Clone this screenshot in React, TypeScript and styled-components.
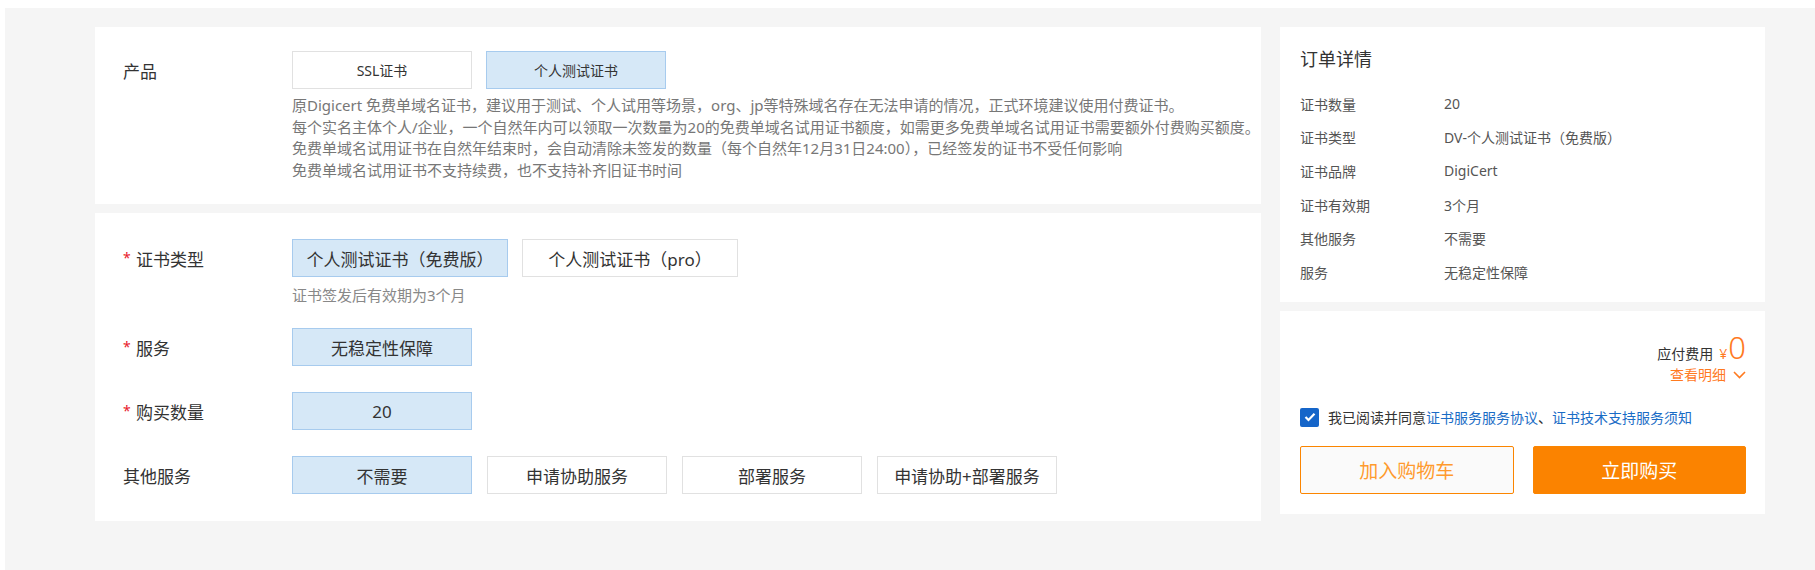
import React from "react";
import styled, { createGlobalStyle } from "styled-components";

const GlobalStyle = createGlobalStyle`
  html, body {
    margin: 0;
    padding: 0;
    background: #f5f5f5;
    font-family: "Noto Sans", "Noto Sans CJK SC", sans-serif;
    color: #333;
  }
  * { box-sizing: border-box; }
`;

const Page = styled.div`
  display: flex;
  min-height: 570px;
`;

const SideStrip = styled.div`
  width: 5px;
  background: #fff;
  flex-shrink: 0;
`;

const Body = styled.div`
  flex: 1;
  display: flex;
  flex-direction: column;
`;

const TopStrip = styled.div`
  height: 8px;
  background: #fff;
`;

const Main = styled.div`
  display: flex;
  align-items: flex-start;
  gap: 19px;
  padding: 19px 50px 0 90px;
`;

const LeftCol = styled.div`
  width: 1166px;
  display: flex;
  flex-direction: column;
  gap: 9px;
`;

const RightCol = styled.div`
  width: 485px;
  display: flex;
  flex-direction: column;
  gap: 9px;
`;

const Card = styled.section<{ $pad: string }>`
  background: #fff;
  padding: ${(p) => p.$pad};
`;

const FormRow = styled.div`
  display: grid;
  grid-template-columns: 169px 1fr;
  align-items: start;
`;

const RowLabel = styled.div`
  font-size: 17px;
  height: 38px;
  padding-top: 4px;
  line-height: 34px;
  color: #333;
  white-space: nowrap;
  display: flex;
  align-items: center;
`;

const Required = styled.span`
  color: #e8202a;
  font-size: 14px;
  width: 13px;
  display: inline-block;
  line-height: 1;
  margin-top: -4px;
`;

const OptionGroup = styled.div<{ $gap: number }>`
  display: flex;
  gap: ${(p) => p.$gap}px;
`;

const OptionButton = styled.div<{ $selected?: boolean; $w?: number; $fs?: number }>`
  width: ${(p) => p.$w ?? 180}px;
  height: 38px;
  display: flex;
  align-items: center;
  justify-content: center;
  font-size: ${(p) => p.$fs ?? 17}px;
  color: #333;
  white-space: nowrap;
  border: 1px solid ${(p) => (p.$selected ? "#a7cbee" : "#e1e1e1")};
  background: ${(p) => (p.$selected ? "#d6e8f7" : "#fff")};
  cursor: pointer;
`;

const Description = styled.div`
  margin-top: 6px;
  font-size: 15px;
  line-height: 21.5px;
  color: #777;
  white-space: nowrap;
`;

const Hint = styled.div`
  margin-top: 11px;
  font-size: 15px;
  line-height: 14px;
  color: #888;
`;

const FormStack = styled.div`
  display: flex;
  flex-direction: column;
  gap: 26px;
`;

const Title = styled.div`
  font-size: 18px;
  line-height: 24px;
  color: #333;
  margin-bottom: 16px;
`;

const DetailRow = styled.div`
  display: grid;
  grid-template-columns: 144px 1fr;
  height: 33.6px;
  align-items: center;
  font-size: 14px;
  color: #555;
`;

const PriceRow = styled.div`
  display: flex;
  justify-content: flex-end;
  align-items: baseline;
  line-height: 32px;
  height: 32px;
`;

const PriceLabel = styled.span`
  font-size: 14px;
  color: #333;
  margin-right: 6px;
`;

const Currency = styled.span`
  font-size: 14px;
  color: #ff7a1f;
  margin-right: 1px;
`;

const Amount = styled.span`
  font-size: 31px;
  color: #ff7a1f;
  font-family: "Noto Sans", sans-serif;
  font-weight: 300;
`;

const DetailToggle = styled.div`
  margin-top: 2px;
  display: flex;
  justify-content: flex-end;
  align-items: center;
  gap: 7px;
  font-size: 14px;
  line-height: 20px;
  color: #ff7a1f;
`;

const Agreement = styled.label`
  margin-top: 23px;
  display: flex;
  align-items: center;
  gap: 9px;
  font-size: 14px;
  line-height: 19px;
  color: #333;
  white-space: nowrap;
`;

const CheckBox = styled.span`
  width: 19px;
  height: 19px;
  border-radius: 2px;
  background: #1565c9;
  display: inline-flex;
  align-items: center;
  justify-content: center;
  flex-shrink: 0;
`;

const LinkText = styled.span`
  color: #1a6cc6;
`;

const ActionRow = styled.div`
  margin-top: 19px;
  display: flex;
  gap: 19px;
`;

const ActionButton = styled.button<{ $primary?: boolean }>`
  flex: 1;
  height: 48px;
  border-radius: 2px;
  font-family: inherit;
  font-size: 19px;
  cursor: pointer;
  border: 1px solid #fb8500;
  background: ${(p) => (p.$primary ? "#fb8300" : "#fafafa")};
  color: ${(p) => (p.$primary ? "#fff" : "#ff9a2e")};
`;

const descLines = [
  "原Digicert 免费单域名证书，建议用于测试、个人试用等场景，org、jp等特殊域名存在无法申请的情况，正式环境建议使用付费证书。",
  "每个实名主体个人/企业，一个自然年内可以领取一次数量为20的免费单域名试用证书额度，如需更多免费单域名试用证书需要额外付费购买额度。",
  "免费单域名试用证书在自然年结束时，会自动清除未签发的数量（每个自然年12月31日24:00），已经签发的证书不受任何影响",
  "免费单域名试用证书不支持续费，也不支持补齐旧证书时间",
];

const details: [string, string][] = [
  ["证书数量", "20"],
  ["证书类型", "DV-个人测试证书（免费版）"],
  ["证书品牌", "DigiCert"],
  ["证书有效期", "3个月"],
  ["其他服务", "不需要"],
  ["服务", "无稳定性保障"],
];

const otherServices = ["不需要", "申请协助服务", "部署服务", "申请协助+部署服务"];

export default function App() {
  return (
    <>
      <GlobalStyle />
      <Page>
        <SideStrip />
        <Body>
          <TopStrip />
          <Main>
            <LeftCol>
              <Card $pad="24px 28px 23px">
                <FormRow>
                  <RowLabel>产品</RowLabel>
                  <div>
                    <OptionGroup $gap={14}>
                      <OptionButton $fs={14}>SSL证书</OptionButton>
                      <OptionButton $fs={14} $selected>
                        个人测试证书
                      </OptionButton>
                    </OptionGroup>
                    <Description>
                      {descLines.map((l) => (
                        <div key={l}>{l}</div>
                      ))}
                    </Description>
                  </div>
                </FormRow>
              </Card>
              <Card $pad="26px 28px 27px">
                <FormStack>
                  <FormRow>
                    <RowLabel>
                      <Required>*</Required>证书类型
                    </RowLabel>
                    <div>
                      <OptionGroup $gap={14}>
                        <OptionButton $w={216} $selected>
                          个人测试证书（免费版）
                        </OptionButton>
                        <OptionButton $w={216}>个人测试证书（pro）</OptionButton>
                      </OptionGroup>
                      <Hint>证书签发后有效期为3个月</Hint>
                    </div>
                  </FormRow>
                  <FormRow>
                    <RowLabel>
                      <Required>*</Required>服务
                    </RowLabel>
                    <OptionGroup $gap={15}>
                      <OptionButton $selected>无稳定性保障</OptionButton>
                    </OptionGroup>
                  </FormRow>
                  <FormRow>
                    <RowLabel>
                      <Required>*</Required>购买数量
                    </RowLabel>
                    <OptionGroup $gap={15}>
                      <OptionButton $selected>20</OptionButton>
                    </OptionGroup>
                  </FormRow>
                  <FormRow>
                    <RowLabel>其他服务</RowLabel>
                    <OptionGroup $gap={15}>
                      {otherServices.map((s, i) => (
                        <OptionButton key={s} $selected={i === 0}>
                          {s}
                        </OptionButton>
                      ))}
                    </OptionGroup>
                  </FormRow>
                </FormStack>
              </Card>
            </LeftCol>
            <RightCol>
              <Card $pad="20px 20px 13px">
                <Title>订单详情</Title>
                {details.map(([k, v]) => (
                  <DetailRow key={k}>
                    <span>{k}</span>
                    <span>{v}</span>
                  </DetailRow>
                ))}
              </Card>
              <Card $pad="20px 19px 20px 20px">
                <PriceRow>
                  <PriceLabel>应付费用</PriceLabel>
                  <Currency>¥</Currency>
                  <Amount>0</Amount>
                </PriceRow>
                <DetailToggle>
                  查看明细
                  <svg width="13" height="8" viewBox="0 0 13 8" fill="none">
                    <path d="M1 1l5.5 5.5L12 1" stroke="#ff7a1f" strokeWidth="1.6" />
                  </svg>
                </DetailToggle>
                <Agreement>
                  <CheckBox>
                    <svg width="12" height="10" viewBox="0 0 12 10" fill="none">
                      <path d="M1.5 5l3 3L10.5 1.8" stroke="#fff" strokeWidth="2.2" />
                    </svg>
                  </CheckBox>
                  <span>
                    我已阅读并同意<LinkText>证书服务服务协议</LinkText>、<LinkText>证书技术支持服务须知</LinkText>
                  </span>
                </Agreement>
                <ActionRow>
                  <ActionButton>加入购物车</ActionButton>
                  <ActionButton $primary>立即购买</ActionButton>
                </ActionRow>
              </Card>
            </RightCol>
          </Main>
        </Body>
      </Page>
    </>
  );
}
